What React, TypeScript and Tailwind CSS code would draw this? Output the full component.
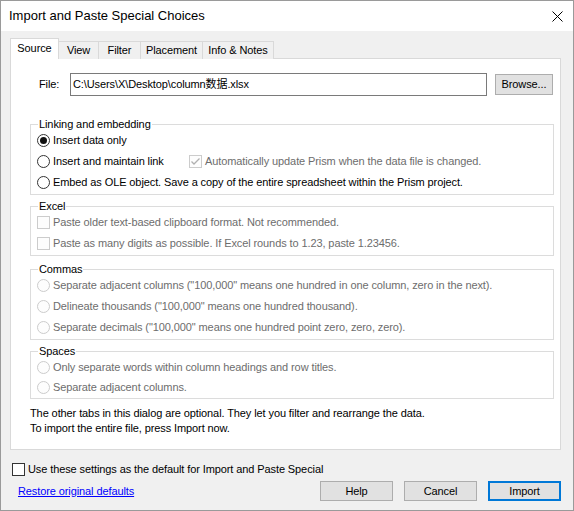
import React from 'react'

const FONT = { fontFamily: '"Liberation Sans", "Noto Sans CJK SC", Arial, sans-serif' }

function Radio({ checked = false, disabled = false }: { checked?: boolean; disabled?: boolean }) {
  return (
    <span
      className={
        'flex w-[13px] h-[13px] shrink-0 items-center justify-center rounded-full border ' +
        (disabled ? 'border-[#cccccc] bg-[#fdfdfd]' : 'border-[#333333] bg-white')
      }
    >
      {checked && <span className="w-[7px] h-[7px] rounded-full bg-[#111111]" />}
    </span>
  )
}

function Check({ checked = false, disabled = false }: { checked?: boolean; disabled?: boolean }) {
  return (
    <span
      className={
        'flex w-[13px] h-[13px] shrink-0 items-center justify-center border ' +
        (disabled ? 'border-[#cccccc] bg-[#fdfdfd]' : 'border-[#333333] bg-white')
      }
    >
      {checked && (
        <svg width="11" height="11" viewBox="0 0 11 11">
          <polyline points="1.5,5.5 4,8 9.5,2.5" fill="none" stroke={disabled ? '#b0b0b0' : '#000'} strokeWidth="1.3" />
        </svg>
      )}
    </span>
  )
}

function Group({ title, children }: { title: string; children: React.ReactNode }) {
  return (
    <fieldset className="ml-[19px] w-[524px] border border-[#dcdcdc] px-[6px] pb-[1px]">
      <legend className="ml-[1px] px-[1px] leading-[13px] text-black">{title}</legend>
      <div className="-mt-[1px]">{children}</div>
    </fieldset>
  )
}

function Row({ children, disabled = false, h = 'h-[21px]' }: { children: React.ReactNode; disabled?: boolean; h?: string }) {
  return (
    <div className={'flex items-center gap-[3px] ' + h + ' ' + (disabled ? 'text-[#6d6d6d]' : 'text-black')}>
      {children}
    </div>
  )
}

function Button({ label, primary = false }: { label: string; primary?: boolean }) {
  return (
    <button
      className={
        'w-[73px] h-[20px] bg-[#e1e1e1] text-[11px] leading-none text-black ' +
        (primary ? 'border-2 border-[#0078d7]' : 'border border-[#adadad]')
      }
    >
      {label}
    </button>
  )
}

const tabs = [
  { label: 'View', w: 'w-[40px]' },
  { label: 'Filter', w: 'w-[42px]' },
  { label: 'Placement', w: 'w-[62px]' },
  { label: 'Info & Notes', w: 'w-[71px]' },
]

export default function App() {
  return (
    <div
      className="flex w-[574px] h-[511px] flex-col border border-[#9a9a9a] bg-[#f0f0f0] text-[11px] tracking-[-0.1px] text-black"
      style={FONT}
    >
      {/* Title bar */}
      <div className="flex h-[30px] shrink-0 items-center justify-between bg-white pl-[8px] pr-[10px] tracking-normal">
        <span className="text-[13px]">Import and Paste Special Choices</span>
        <svg width="11" height="11" viewBox="0 0 11 11">
          <path d="M0.5 0.5 L10.5 10.5 M10.5 0.5 L0.5 10.5" stroke="#000" strokeWidth="1" />
        </svg>
      </div>

      <div className="flex flex-col pl-[9px] pr-[12px]">
        {/* Tabs */}
        <div className="relative z-10 mt-[7px] -mb-px flex h-[21px] items-end">
          <div className="flex h-[21px] w-[49px] items-center justify-center border border-b-0 border-[#d9d9d9] bg-white pb-[1px]">
            Source
          </div>
          {tabs.map((t) => (
            <div
              key={t.label}
              className={'flex h-[18px] items-center justify-center border-t border-r border-[#d9d9d9] bg-[#f0f0f0] ' + t.w}
            >
              {t.label}
            </div>
          ))}
        </div>

        {/* Panel */}
        <div className="flex h-[392px] flex-col border border-[#d9d9d9] bg-white">
          <div className="mt-[14px] flex items-center">
            <span className="ml-[28px] w-[19px]">File:</span>
            <div className="ml-[12px] flex h-[23px] w-[417px] items-center border border-[#7a7a7a] pl-[2px]">
              C:\Users\X\Desktop\column数据.xlsx
            </div>
            <button className="ml-[8px] h-[21px] w-[58px] border border-[#adadad] bg-[#e1e1e1] text-[11px]">
              Browse...
            </button>
          </div>

          <div className="mt-[22px]">
            <Group title="Linking and embedding">
              <Row>
                <Radio checked />
                <span>Insert data only</span>
              </Row>
              <Row>
                <div className="flex w-[149px] items-center gap-[3px]">
                  <Radio />
                  <span>Insert and maintain link</span>
                </div>
                <Check checked disabled />
                <span className="text-[#6d6d6d]">Automatically update Prism when the data file is changed.</span>
              </Row>
              <Row>
                <Radio />
                <span>Embed as OLE object. Save a copy of the entire spreadsheet within the Prism project.</span>
              </Row>
            </Group>
          </div>

          <div className="mt-[5px]">
            <Group title="Excel">
              <Row disabled>
                <Check disabled />
                <span>Paste older text-based clipboard format. Not recommended.</span>
              </Row>
              <Row disabled>
                <Check disabled />
                <span>Paste as many digits as possible. If Excel rounds to 1.23, paste 1.23456.</span>
              </Row>
            </Group>
          </div>

          <div className="mt-[7px]">
            <Group title="Commas">
              <Row disabled>
                <Radio disabled />
                <span>Separate adjacent columns ("100,000" means one hundred in one column, zero in the next).</span>
              </Row>
              <Row disabled>
                <Radio disabled />
                <span>Delineate thousands ("100,000" means one hundred thousand).</span>
              </Row>
              <Row disabled>
                <Radio disabled />
                <span>Separate decimals ("100,000" means one hundred point zero, zero, zero).</span>
              </Row>
            </Group>
          </div>

          <div className="mt-[5px]">
            <Group title="Spaces">
              <Row disabled h="h-[20px]">
                <Radio disabled />
                <span>Only separate words within column headings and row titles.</span>
              </Row>
              <Row disabled h="h-[20px]">
                <Radio disabled />
                <span>Separate adjacent columns.</span>
              </Row>
            </Group>
          </div>

          <div className="ml-[19px] mt-[7px] leading-[15px]">
            <p>The other tabs in this dialog are optional. They let you filter and rearrange the data.</p>
            <p>To import the entire file, press Import now.</p>
          </div>
        </div>

        {/* Footer */}
        <div className="mt-[12px] ml-[2px] flex h-[15px] items-center gap-[3px]">
          <Check />
          <span>Use these settings as the default for Import and Paste Special</span>
        </div>
        <div className="mt-[4px] flex items-center justify-between">
          <a className="ml-[8px] text-[#0000ff] underline">Restore original defaults</a>
          <div className="flex gap-[11px]">
            <Button label="Help" />
            <Button label="Cancel" />
            <Button label="Import" primary />
          </div>
        </div>
      </div>
    </div>
  )
}
